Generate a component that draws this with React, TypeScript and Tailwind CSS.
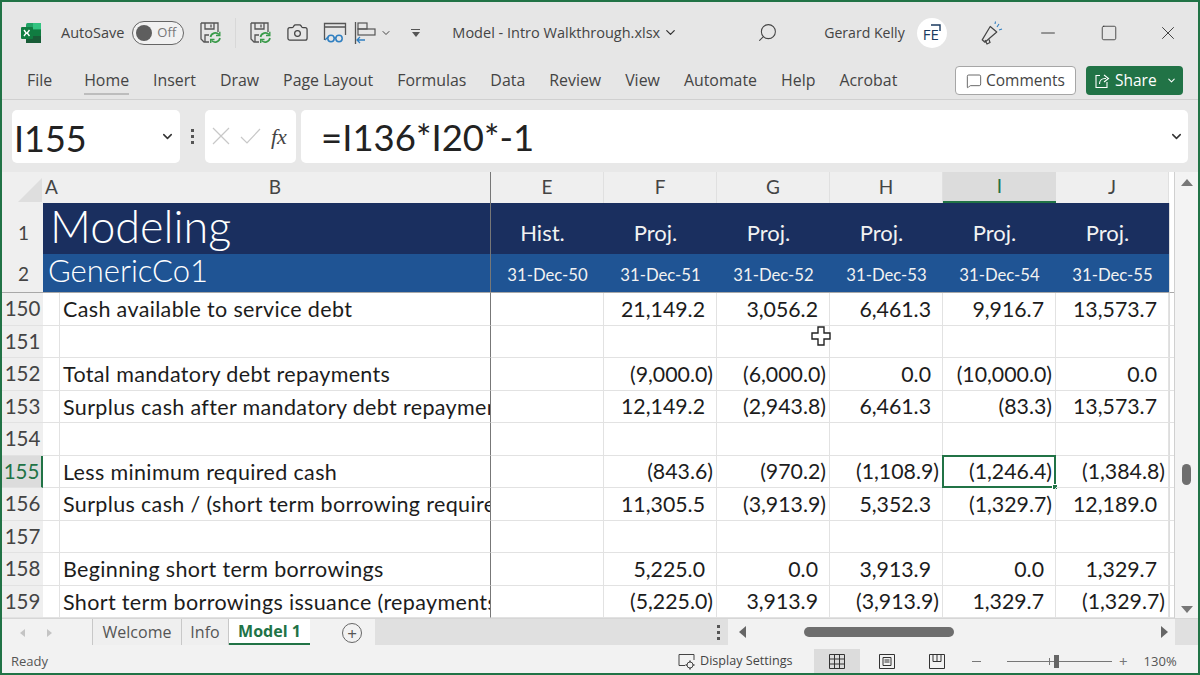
import { ChevronDown, MessageSquare, Minus, Search, Square, X, Camera } from "lucide-react"

const ui = "font-['Open_Sans',sans-serif]"
const sheet = "font-['Lato',sans-serif]"

const ribbon = ["File", "Home", "Insert", "Draw", "Page Layout", "Formulas", "Data", "Review", "View", "Automate", "Help", "Acrobat"]
const cols = ["E", "F", "G", "H", "I", "J"]

const rows: { n: number; label: string; vals: string[] }[] = [
  { n: 150, label: "Cash available to service debt", vals: ["", "21,149.2", "3,056.2", "6,461.3", "9,916.7", "13,573.7"] },
  { n: 151, label: "", vals: ["", "", "", "", "", ""] },
  { n: 152, label: "Total mandatory debt repayments", vals: ["", "(9,000.0)", "(6,000.0)", "0.0", "(10,000.0)", "0.0"] },
  { n: 153, label: "Surplus cash after mandatory debt repayments", vals: ["", "12,149.2", "(2,943.8)", "6,461.3", "(83.3)", "13,573.7"] },
  { n: 154, label: "", vals: ["", "", "", "", "", ""] },
  { n: 155, label: "Less minimum required cash", vals: ["", "(843.6)", "(970.2)", "(1,108.9)", "(1,246.4)", "(1,384.8)"] },
  { n: 156, label: "Surplus cash / (short term borrowing required)", vals: ["", "11,305.5", "(3,913.9)", "5,352.3", "(1,329.7)", "12,189.0"] },
  { n: 157, label: "", vals: ["", "", "", "", "", ""] },
  { n: 158, label: "Beginning short term borrowings", vals: ["", "5,225.0", "0.0", "3,913.9", "0.0", "1,329.7"] },
  { n: 159, label: "Short term borrowings issuance (repayments)", vals: ["", "(5,225.0)", "3,913.9", "(3,913.9)", "1,329.7", "(1,329.7)"] },
]

function ExcelLogo() {
  return (
    <svg width="22" height="22" viewBox="0 0 22 22">
      <rect x="6" y="1" width="15" height="20" rx="1.5" fill="#21a366" />
      <rect x="13" y="1" width="8" height="6.5" fill="#33c481" />
      <rect x="13" y="7.5" width="8" height="6.5" fill="#107c41" />
      <rect x="6" y="14" width="15" height="7" fill="#185c37" />
      <rect x="1" y="5" width="12" height="12" rx="1" fill="#107c41" />
      <path d="M4 8 L6.2 11 L4 14 M9.5 8 L7.2 11 L9.5 14" stroke="#fff" strokeWidth="1.4" fill="none" />
    </svg>
  )
}

function SaveSync() {
  return (
    <svg width="23" height="23" viewBox="0 0 23 23" fill="none">
      <path d="M2 2 H19 V11 M2 2 V18 L5 21 H10" stroke="#555" strokeWidth="1.3" />
      <path d="M6 2 V8 H15 V2 M12 3.5 V6.5 M6 21 V14 H10" stroke="#555" strokeWidth="1.3" />
      <path d="M11.5 16 A5 5 0 0 1 20 13.5 M21 17 A5 5 0 0 1 12.5 19.5" stroke="#3a9a4a" strokeWidth="1.7" />
      <path d="M20.8 10.8 V14.5 H17 M11.7 22 V18.5 H15.5" stroke="#3a9a4a" strokeWidth="1.4" />
    </svg>
  )
}

function PreviewIcon() {
  return (
    <svg width="24" height="22" viewBox="0 0 24 22" fill="none">
      <path d="M1.5 18 V1.5 H22.5 V13 M1.5 5 H22.5" stroke="#555" strokeWidth="1.3" />
      <circle cx="8" cy="16.5" r="3.2" stroke="#2f7fc1" strokeWidth="1.5" />
      <circle cx="16" cy="16.5" r="3.2" stroke="#2f7fc1" strokeWidth="1.5" />
      <path d="M11 16 H13 M5 15 L2 18" stroke="#2f7fc1" strokeWidth="1.3" />
    </svg>
  )
}

function AlignIcon() {
  return (
    <svg width="22" height="24" viewBox="0 0 22 24" fill="none">
      <path d="M1.5 1 V23" stroke="#555" strokeWidth="1.3" />
      <rect x="4" y="2" width="9" height="6" stroke="#555" strokeWidth="1.2" />
      <rect x="4" y="8" width="17" height="6" stroke="#555" strokeWidth="1.2" />
      <path d="M11 19 H3 M6 16 L3 19 L6 22" stroke="#2f7fc1" strokeWidth="1.3" />
    </svg>
  )
}

function ShareIcon() {
  return (
    <svg width="16" height="16" viewBox="0 0 16 16" fill="none" stroke="#fff" strokeWidth="1.1">
      <path d="M6 2.5 H2 V14.5 H13 V9" />
      <path d="M5.5 11 C5.5 7.5 8 5.5 11 5.5 H12 M10 2 L14.5 5.5 L10 9" />
    </svg>
  )
}

function FeedbackIcon() {
  return (
    <svg width="24" height="26" viewBox="0 0 24 26" fill="none">
      <path d="M13 7 L18 14 L4 21 L2 18 Z" stroke="#444" strokeWidth="1.2" strokeLinejoin="round" transform="rotate(-14 10 14)" />
      <path d="M6 20 L8 24 L11 22.5 L10 19.5" stroke="#444" strokeWidth="1.2" />
      <path d="M18 7 L20 4 M20 10 L23 9 M16 4 L16.5 1.5" stroke="#2f7fc1" strokeWidth="1.1" />
    </svg>
  )
}

function FormulaBar() {
  return (
    <div className="h-[72px] shrink-0 flex items-center pl-[10px] pr-[10px] bg-[#e8e8e8]">
      <div className={`w-[168px] h-[53px] bg-white rounded-[5px] flex items-center justify-between pl-[2px] pr-[5px] ${sheet} text-[36px] text-[#222]`}>
        <span className="pt-[3px]">I155</span>
        <ChevronDown size={15} strokeWidth={2.4} className="text-[#333]" />
      </div>
      <div className="w-[25px] flex flex-col items-center gap-[3px]">
        <span className="w-[3px] h-[3px] bg-[#555]" />
        <span className="w-[3px] h-[3px] bg-[#555]" />
        <span className="w-[3px] h-[3px] bg-[#555]" />
      </div>
      <div className="w-[91px] h-[53px] bg-white rounded-[5px] flex items-center pl-[7px] gap-[10px]">
        <svg width="18" height="18" viewBox="0 0 18 18" stroke="#c8c8c8" strokeWidth="1.2"><path d="M1 1 L17 17 M17 1 L1 17" /></svg>
        <svg width="21" height="16" viewBox="0 0 21 16" fill="none" stroke="#c8c8c8" strokeWidth="1.2"><path d="M1 9 L7 15 L20 1" /></svg>
        <span className="font-['Liberation_Serif',serif] italic text-[22px] text-[#444]">fx</span>
      </div>
      <div className={`ml-[5px] flex-1 h-[53px] bg-white rounded-[5px] flex items-center justify-between pl-[20px] pr-[4px] ${sheet} text-[36.5px] text-[#222]`}>
        <span className="pt-[3px]">=I136*I20*-1</span>
        <ChevronDown size={15} strokeWidth={2.4} className="text-[#333]" />
      </div>
    </div>
  )
}

function SheetGrid() {
  return (
    <div className="relative h-[446px] shrink-0 flex bg-white">
      <div className="w-[1172px] grid grid-cols-[41px_17px_431px_repeat(6,113px)_5px] grid-rows-[31px_51px_39px_repeat(10,32.5px)] overflow-hidden">
        {/* column headers */}
        <div className="bg-[#efefef] relative overflow-hidden">
          <div className="absolute right-[1px] bottom-[1px] w-0 h-0 border-l-[24px] border-l-transparent border-b-[24px] border-b-[#dedede]" />
        </div>
        <div className={`bg-[#efefef] ${sheet} text-[19px] text-[#444] flex items-center justify-center`}>A</div>
        <div className={`bg-[#efefef] ${sheet} text-[19px] text-[#444] flex items-center justify-center border-r border-r-[#777]`}>B</div>
        {cols.map((c) => (
          <div
            key={c}
            className={`${sheet} text-[19px] flex items-center justify-center ${c === "I" ? "bg-[#dcdcdc] text-[#217346] border-b-2 border-b-[#217346]" : "bg-[#efefef] text-[#444] border-r border-r-[#e0e0e0]"}`}
          >
            {c}
          </div>
        ))}
        <div className="bg-white" />

        {/* row 1 */}
        <div className={`bg-[#efefef] ${sheet} text-[19px] text-[#444] flex items-end justify-center pb-[7px] pl-[2px]`}>1</div>
        <div className="col-span-2 bg-[#1a2f5f] border-r border-r-[#777]">
          <div className={`${sheet} font-light text-[45px] leading-[47px] text-white pl-[7px]`}>Modeling</div>
        </div>
        {cols.map((c, i) => (
          <div key={c} className={`bg-[#1a2f5f] ${sheet} text-[22px] text-[#f2f2f2] flex items-end justify-center pb-[5px] pr-[10px]`}>
            {i === 0 ? "Hist." : "Proj."}
          </div>
        ))}
        <div className="bg-white border-l border-l-[#ddd]" />

        {/* row 2 */}
        <div className={`bg-[#efefef] border-b border-b-[#a8a8a8] ${sheet} text-[19px] text-[#444] flex items-center justify-center pl-[2px] pt-[2px]`}>2</div>
        <div className="col-span-2 bg-[#1f5494] border-r border-r-[#777] border-b border-b-[#a8a8a8]">
          <div className={`${sheet} font-light text-[31px] leading-[33px] text-white pl-[5px]`}>GenericCo1</div>
        </div>
        {cols.map((c, i) => (
          <div key={c} className={`bg-[#1f5494] border-b border-b-[#a8a8a8] ${sheet} text-[16.7px] text-[#f2f2f2] flex items-center justify-center pt-[5px]`}>
            {`31-Dec-${50 + i}`}
          </div>
        ))}
        <div className="bg-white border-b border-b-[#a8a8a8] border-l border-l-[#ddd]" />

        {/* body */}
        {rows.map((r) => (
          <div key={r.n} className="contents">
            <div className={`${sheet} text-[20.5px] flex items-center justify-center border-b border-b-[#e2e2e2] ${r.n === 155 ? "bg-[#dcdcdc] text-[#217346] border-r-2 border-r-[#217346]" : "bg-[#efefef] text-[#444]"}`}>
              {r.n}
            </div>
            <div className="border-b border-r border-[#e2e2e2]" />
            <div className={`${sheet} text-[21.5px] tracking-[0.35px] text-[#1c1c1c] flex items-center pl-[3px] pt-[1px] whitespace-nowrap overflow-hidden border-b border-b-[#e2e2e2] border-r border-r-[#777]`}>
              {r.label}
            </div>
            {r.vals.map((v, i) => {
              const selected = r.n === 155 && i === 4
              return (
                <div
                  key={i}
                  className={`relative ${sheet} text-[21.3px] text-[#1c1c1c] flex items-center justify-end pt-[2px] whitespace-nowrap border-b border-r border-[#e2e2e2] ${v.startsWith("(") ? "pr-[3px]" : "pr-[11px]"}`}
                >
                  {v}
                  {selected && (
                    <>
                      <div className="absolute -left-[1px] -top-[1px] right-[-1px] bottom-[-1px] border-2 border-[#217346]" />
                      <div className="absolute right-[-3px] bottom-[-3px] w-[6px] h-[6px] bg-[#217346] border border-white" />
                    </>
                  )}
                </div>
              )
            })}
            <div className="border-b border-b-[#e2e2e2] border-l border-l-[#ddd]" />
          </div>
        ))}
      </div>

      {/* vertical scrollbar */}
      <div className="flex-1 bg-[#f3f3f3] border-l border-l-[#d0d0d0] flex flex-col items-center justify-between pt-[7px] pb-[5px] relative">
        <div className="w-0 h-0 border-x-[6px] border-x-transparent border-b-[7px] border-b-[#777]" />
        <div className="w-0 h-0 border-x-[6px] border-x-transparent border-t-[7px] border-t-[#777]" />
        <div className="absolute left-[7px] top-[292px] w-[9px] h-[21px] rounded-[5px] bg-[#6e6e6e]" />
      </div>

      {/* mouse cursor */}
      <svg className="absolute left-[809px] top-[154px]" width="20" height="20" viewBox="0 0 20 20">
        <path d="M7 1 H13 V7 H19 V13 H13 V19 H7 V13 H1 V7 H7 Z" fill="#fff" stroke="#222" strokeWidth="1.4" />
      </svg>
    </div>
  )
}

function TabStrip() {
  return (
    <div className={`h-[29px] shrink-0 flex bg-[#f2f2f2] ${ui} border-t border-t-[#d6d6d6]`}>
      <div className="w-[90px] flex items-center">
        <span className="ml-[18px] w-0 h-0 border-y-[4px] border-y-transparent border-r-[5px] border-r-[#c4c4c4]" />
        <span className="ml-[22px] w-0 h-0 border-y-[4px] border-y-transparent border-l-[5px] border-l-[#c4c4c4]" />
      </div>
      <div className="w-[90px] h-[26px] border-l border-r border-[#c8c8c8] bg-[#efefef] flex items-center justify-center text-[16px] text-[#555]">Welcome</div>
      <div className="w-[47px] h-[26px] border-r border-[#c8c8c8] bg-[#efefef] flex items-center justify-center text-[16px] text-[#555]">Info</div>
      <div className="w-[81px] h-[26px] bg-white border-b-2 border-b-[#217346] flex items-center justify-center text-[16px] font-bold text-[#217346]">Model 1</div>
      <div className="w-[52px] flex items-center justify-end">
        <div className="w-[20px] h-[20px] rounded-full border-[1.5px] border-[#666] flex items-center justify-center text-[#555] text-[17px] leading-none">+</div>
      </div>
      <div className="ml-[13px] w-[334px] bg-[#e0e0e0] h-[26px]" />
      <div className="w-[19px] h-[26px] bg-[#e0e0e0] flex flex-col items-center justify-center gap-[3px]">
        <span className="w-[3px] h-[3px] bg-[#555]" />
        <span className="w-[3px] h-[3px] bg-[#555]" />
        <span className="w-[3px] h-[3px] bg-[#555]" />
      </div>
      <div className="w-[443px] h-[26px] bg-[#f2f2f2] flex items-center justify-between px-[7px] ml-[4px]">
        <span className="w-0 h-0 border-y-[6px] border-y-transparent border-r-[7px] border-r-[#666]" />
        <span className="w-[150px] h-[10px] rounded-[5px] bg-[#6e6e6e] ml-[58px] mr-[207px]" />
        <span className="w-0 h-0 border-y-[6px] border-y-transparent border-l-[7px] border-l-[#666]" />
      </div>
      <div className="flex-1 bg-[#e0e0e0] h-[26px]" />
    </div>
  )
}

function StatusBar() {
  return (
    <div className={`flex-1 bg-[#f2f2f2] flex items-center pl-[9px] pt-[2px] ${ui} text-[13px] text-[#555]`}>
      <span>Ready</span>
      <svg className="ml-[630px]" width="18" height="18" viewBox="0 0 18 18" fill="none" stroke="#444" strokeWidth="1">
        <path d="M7 12.5 H1 V1.5 H16 V7" />
        <circle cx="12" cy="12" r="3" />
        <path d="M12 7.5 V9 M12 15 V16.5 M7.5 12 H9 M15 12 H16.5" strokeWidth="1.5" />
      </svg>
      <span className="ml-[4px] w-[114px] text-[12.6px] text-[#444]">Display Settings</span>
      <div className="w-[46px] h-[25px] bg-[#dcdcdc] flex items-center justify-center">
        <svg width="16" height="15" viewBox="0 0 16 15" fill="none" stroke="#333" strokeWidth="1">
          <path d="M.5 .5 H15.5 V14.5 H.5 Z M5.5 .5 V14.5 M10.5 .5 V14.5 M.5 5 H15.5 M.5 10 H15.5" />
        </svg>
      </div>
      <svg className="ml-[19px]" width="16" height="15" viewBox="0 0 16 15" fill="none" stroke="#333" strokeWidth="1">
        <path d="M.5 .5 H15.5 V14.5 H.5 Z M4 3.5 H12 V11.5 H4 Z M5.5 6 H10.5 M5.5 8 H10.5" />
      </svg>
      <svg className="ml-[34px]" width="16" height="15" viewBox="0 0 16 15" fill="none" stroke="#333" strokeWidth="1">
        <path d="M.5 .5 H15.5 V14.5 H.5 Z M4 .5 V7.5 H12 V.5 M8 .5 V7.5" />
      </svg>
      <div className="ml-[27px] w-[9px] h-[1px] bg-[#777]" />
      <div className="ml-[26px] w-[105px] h-[1px] bg-[#777] relative">
        <div className="absolute left-[47px] -top-[6px] w-[5px] h-[13px] bg-[#666]" />
        <div className="absolute left-[42px] -top-[3px] w-[1px] h-[7px] bg-[#777]" />
      </div>
      <span className="ml-[7px] text-[15px] leading-none text-[#777]">+</span>
      <span className="ml-[16px] text-[#555]">130%</span>
    </div>
  )
}

export default function App() {
  return (
    <div className={`w-[1200px] h-[675px] flex flex-col overflow-hidden border-2 border-[#217346] bg-[#e6e6e6] ${ui}`}>
      {/* title bar */}
      <div className="h-[60px] shrink-0 flex items-center text-[#444] pt-[1px]">
        <div className="ml-[18px]"><ExcelLogo /></div>
        <span className="ml-[19px] text-[14.5px] text-[#444]">AutoSave</span>
        <div className="ml-[8px] w-[52px] h-[24px] rounded-full border-[1.5px] border-[#666] flex items-center pl-[3px] gap-[5px] bg-[#f1f1f1]">
          <span className="w-[16px] h-[16px] rounded-full bg-[#5e5e5e]" />
          <span className="text-[13px] text-[#777]">Off</span>
        </div>
        <div className="ml-[15px]"><SaveSync /></div>
        <div className="ml-[13px] w-[1px] h-[30px] bg-[#d8d8d8]" />
        <div className="ml-[13px]"><SaveSync /></div>
        <Camera size={23} strokeWidth={1.3} className="ml-[14px] text-[#444]" />
        <div className="ml-[14px]"><PreviewIcon /></div>
        <div className="ml-[7px]"><AlignIcon /></div>
        <ChevronDown size={12} strokeWidth={2} className="ml-[4px] text-[#444]" />
        <div className="ml-[19px] flex flex-col items-center gap-[2px]">
          <span className="w-[9px] h-[1px] bg-[#555]" />
          <span className="w-0 h-0 border-x-[4.5px] border-x-transparent border-t-[5px] border-t-[#555]" />
        </div>
        <span className="ml-[32px] text-[14.5px] text-[#444] whitespace-nowrap">Model - Intro Walkthrough.xlsx</span>
        <ChevronDown size={15} strokeWidth={2} className="ml-[3px] text-[#333]" />
        <Search size={21} strokeWidth={1.2} className="ml-[79px] text-[#444] -scale-x-100" />
        <span className="ml-[46px] text-[14.1px] text-[#444] whitespace-nowrap">Gerard Kelly</span>
        <div className="relative ml-[12px] w-[30px] h-[30px] rounded-full bg-white flex items-center justify-center text-[#1a3a5f] text-[15px] leading-none pt-[4px] pr-[2px]">
          FE
          <svg className="absolute right-[6px] top-[6px]" width="10" height="7" viewBox="0 0 10 7" fill="none" stroke="#1a3a5f" strokeWidth="1.4"><path d="M0 1 H9 V7" /></svg>
        </div>
        <div className="ml-[32px]"><FeedbackIcon /></div>
        <Minus size={22} strokeWidth={1} className="ml-[34px] text-[#333]" />
        <Square size={18} strokeWidth={1.1} className="ml-[41px] text-[#333]" />
        <X size={22} strokeWidth={1} className="ml-[39px] text-[#333]" />
      </div>

      {/* ribbon tabs */}
      <div className="h-[38px] shrink-0 flex items-center pr-[15px] border-b border-b-[#d0d0d0]">
        <div className="flex-1 flex gap-[24px] pl-[25px] text-[15.9px] text-[#444]">
          {ribbon.map((t) => (
            <span key={t} className={`whitespace-nowrap relative ${t === "Home" ? "ml-[8px]" : ""}`}>
              {t}
              {t === "Home" && <span className="absolute left-0 right-0 -bottom-[3px] h-[2px] bg-[#bdbdbd]" />}
            </span>
          ))}
        </div>
        <div className="w-[121px] h-[29px] rounded-[4px] bg-white border-[1.5px] border-[#a6a6a6] flex items-center justify-center gap-[4px] text-[15.5px] text-[#444]">
          <MessageSquare size={16} strokeWidth={1.2} />
          Comments
        </div>
        <div className="ml-[10px] w-[97px] h-[29px] rounded-[4px] bg-[#217346] flex items-center pl-[8px] gap-[5px] text-[15.5px] text-white">
          <ShareIcon />
          Share
          <ChevronDown size={11} strokeWidth={2.2} className="ml-[4px]" />
        </div>
      </div>

      <FormulaBar />
      <SheetGrid />
      <TabStrip />
      <StatusBar />
    </div>
  )
}
